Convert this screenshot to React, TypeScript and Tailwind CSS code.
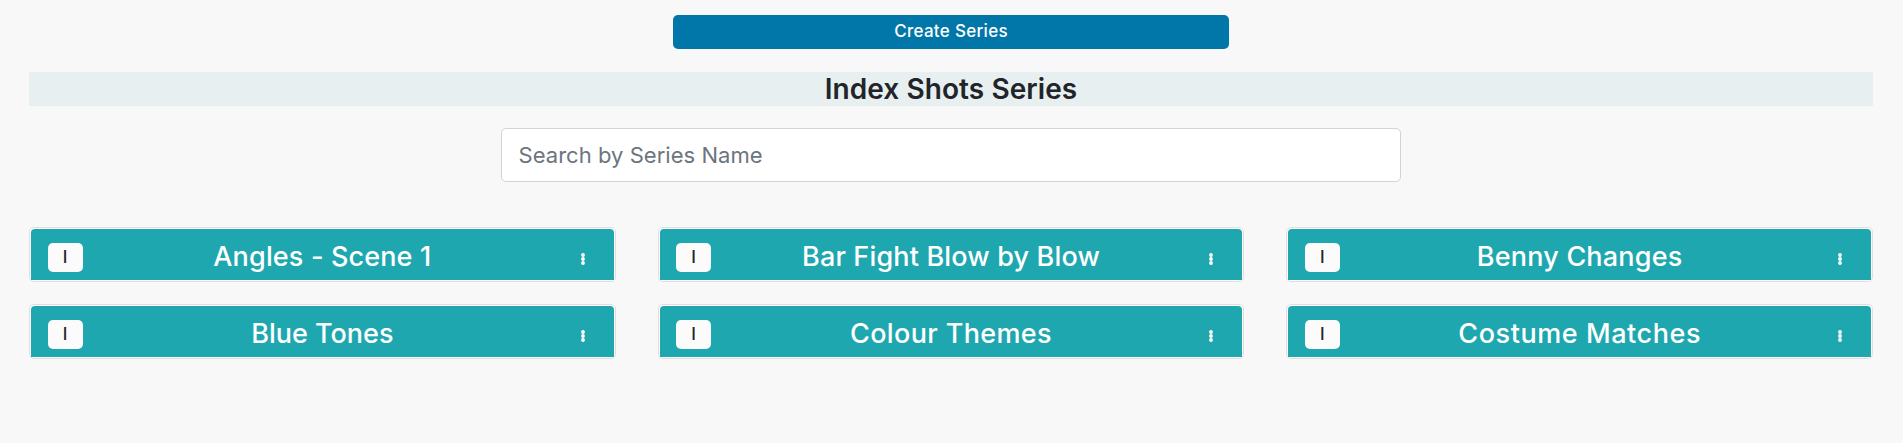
const series = [
  { name: "Angles - Scene 1", spacing: "tracking-[0.15px]" },
  { name: "Bar Fight Blow by Blow", spacing: "tracking-[0.16px]" },
  { name: "Benny Changes", spacing: "tracking-[0.19px]" },
  { name: "Blue Tones", spacing: "tracking-normal" },
  { name: "Colour Themes", spacing: "tracking-[0.37px]" },
  { name: "Costume Matches", spacing: "tracking-[0.57px]" },
];

function SeriesCard({ name, spacing }: { name: string; spacing: string }) {
  return (
    <article className="h-[55px] rounded-[5px] border border-[#dfdfdf] bg-white p-px">
      <div className="flex h-[51px] items-start rounded-t-[4px] bg-[#1fa7b0] pr-[29px] pl-[16.5px] text-white">
        <button className="mt-[14px] flex h-[29px] w-[35px] shrink-0 items-center justify-center rounded-[5px] bg-[#fbfbfb] text-[17px] leading-none font-medium text-[#212529]">
          I
        </button>
        <h2 className="mt-[7px] flex-1 pr-[18.5px] text-center text-[27px] leading-[42px] font-medium whitespace-nowrap">
          <span className={spacing}>{name}</span>
        </h2>
        <svg className="mt-[24px] shrink-0" width="4" height="12" viewBox="0 0 4 12" fill="currentColor">
          <circle cx="2" cy="2" r="1.9" />
          <circle cx="2" cy="6" r="1.9" />
          <circle cx="2" cy="10" r="1.9" />
        </svg>
      </div>
    </article>
  );
}

export default function App() {
  return (
    <main className="flex min-h-[443px] flex-col items-center bg-[#f8f8f8] pt-[15px] pr-[30px] pl-[29px] font-['Inter',sans-serif] text-[#212529]">
      <button className="h-[34px] w-[556px] rounded-[5px] bg-[#0077a8] pb-[2px] text-[17px] leading-[32px] font-medium tracking-[0.3px] text-white">
        Create Series
      </button>
      <h1 className="mt-[23px] h-[34px] w-full bg-[#e7eff1] text-center text-[28px] leading-[34px] font-semibold tracking-[0.08px]">
        Index Shots Series
      </h1>
      <input
        className="mt-[22px] h-[54px] w-[900px] rounded-[5px] border border-[#ced4da] bg-white px-[16.5px] text-[22px] tracking-[0.04px] outline-none placeholder:text-[#6c757d]"
        placeholder="Search by Series Name"
      />
      <section className="mt-[45px] grid w-full grid-cols-3 gap-x-[42px] gap-y-[22px]">
        {series.map((item) => (
          <SeriesCard key={item.name} name={item.name} spacing={item.spacing} />
        ))}
      </section>
    </main>
  );
}
